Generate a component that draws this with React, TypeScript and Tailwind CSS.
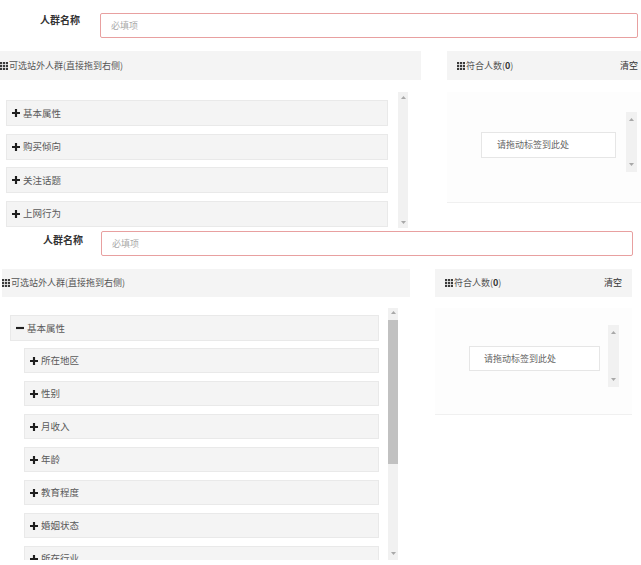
import React from 'react';

function GridIcon() {
  return (
    <svg width="8" height="8" viewBox="0 0 8 8" className="shrink-0 mr-[1px]">
      {[0, 3, 6].flatMap((y) =>
        [0, 3, 6].map((x) => <rect key={`${x}-${y}`} x={x} y={y} width="2.2" height="2.2" fill="#3a3a3a" />)
      )}
    </svg>
  );
}

function PlusIcon() {
  return (
    <svg width="8" height="8" viewBox="0 0 9 9" className="shrink-0">
      <path d="M3.3 0h2.4v3.3H9v2.4H5.7V9H3.3V5.7H0V3.3h3.3z" fill="#1f1f1f" />
    </svg>
  );
}

function MinusIcon() {
  return (
    <svg width="8" height="8" viewBox="0 0 9 9" className="shrink-0">
      <rect x="0" y="3.3" width="9" height="2.4" fill="#1f1f1f" />
    </svg>
  );
}

function Arrow({ down }: { down?: boolean }) {
  return (
    <svg width="5" height="3" viewBox="0 0 5 3">
      <path d={down ? 'M0 0h5L2.5 3z' : 'M2.5 0L5 3H0z'} fill="#a8a8a8" />
    </svg>
  );
}

function Item({ label, open }: { label: string; open?: boolean }) {
  return (
    <div className="flex items-center gap-[3px] pl-[5px] bg-[#f4f4f4] border border-[#e9e9e9] text-[9.5px] text-[#5a5a5a] shrink-0 h-full">
      {open ? <MinusIcon /> : <PlusIcon />}
      <span>{label}</span>
    </div>
  );
}

const subItems = ['所在地区', '性别', '月收入', '年龄', '教育程度', '婚姻状态', '所在行业'];

export default function App() {
  return (
    <div className="w-[641px] h-[565px] overflow-hidden bg-white font-['Noto_Sans_CJK_SC','Liberation_Sans',sans-serif]">
      {/* collapsed state */}
      <section className="h-[228px] overflow-hidden">
        <div className="flex items-start pt-[13px]">
          <div className="w-[100px] shrink-0 pl-[40px] pt-[1px] text-[10px] leading-[12px] font-bold text-[#333]">人群名称</div>
          <div className="w-[538px] h-[25px] shrink-0 border border-[#e8a0a0] rounded-[2px] flex items-center pl-[10px] text-[9px] text-[#aaa]">
            必填项
          </div>
        </div>

        <div className="flex mt-[13px] h-[29px]">
          <div className="w-[421px] shrink-0 bg-[#f4f4f4] flex items-center text-[9px] text-[#555]">
            <GridIcon />
            可选站外人群(直接拖到右侧)
          </div>
          <div className="ml-[26px] w-[205px] shrink-0 bg-[#f4f4f4] flex items-center pl-[10px] pr-[14px] text-[9px] text-[#555]">
            <GridIcon />
            符合人数(<b className="text-[#333]">0</b>)
            <span className="ml-auto text-[#333]">清空</span>
          </div>
        </div>

        <div className="flex mt-[12px]">
          <div className="w-[421px] shrink-0 flex">
            <div className="w-[388px] h-[136px] pl-[6px] pt-[8px] flex flex-col gap-[7.5px] overflow-hidden">
              {['基本属性', '购买倾向', '关注话题', '上网行为'].map((t) => (
                <div key={t} className="h-[26px] shrink-0">
                  <Item label={t} />
                </div>
              ))}
            </div>
            <div className="ml-[10px] w-[10px] h-[136px] bg-[#f1f1f1] flex flex-col items-center justify-between py-[4px]">
              <Arrow />
              <Arrow down />
            </div>
          </div>
          <div className="ml-[26px] w-[205px] shrink-0 h-[111px] border-b border-[#f0f0f0] bg-[#fdfdfd] flex items-start pl-[34px]">
            <div className="mt-[40px] w-[135px] h-[26px] border border-[#e6e6e6] bg-white flex items-center pl-[15px] text-[9px] text-[#666]">
              请拖动标签到此处
            </div>
            <div className="mt-[20px] ml-[10px] w-[11px] h-[60px] bg-[#f1f1f1] flex flex-col items-center justify-between py-[6px]">
              <Arrow />
              <Arrow down />
            </div>
          </div>
        </div>
      </section>

      {/* expanded state */}
      <section className="h-[337px] overflow-hidden">
        <div className="flex items-start pt-[3px]">
          <div className="w-[101px] shrink-0 pl-[43px] pt-[3px] text-[10px] leading-[12px] font-bold text-[#333]">人群名称</div>
          <div className="w-[532px] h-[25px] shrink-0 border border-[#e8a0a0] rounded-[2px] flex items-center pl-[10px] text-[9px] text-[#aaa]">
            必填项
          </div>
        </div>

        <div className="flex mt-[13px] h-[28px]">
          <div className="ml-[2px] w-[408px] shrink-0 bg-[#f4f4f4] flex items-center text-[9px] text-[#555]">
            <GridIcon />
            可选站外人群(直接拖到右侧)
          </div>
          <div className="ml-[25px] w-[197px] shrink-0 bg-[#f4f4f4] flex items-center pl-[10px] pr-[10px] text-[9px] text-[#555]">
            <GridIcon />
            符合人数(<b className="text-[#333]">0</b>)
            <span className="ml-auto text-[#333]">清空</span>
          </div>
        </div>

        <div className="flex mt-[11px]">
          <div className="w-[398px] shrink-0 flex">
            <div className="w-[388px] h-[252px] pl-[10px] pt-[7px] flex flex-col overflow-hidden">
              <div className="w-[369px] h-[26px] shrink-0">
                <Item label="基本属性" open />
              </div>
              <div className="ml-[14px] mt-[7px] w-[355px] flex flex-col gap-[8px]">
                {subItems.map((t) => (
                  <div key={t} className="h-[25px] shrink-0">
                    <Item label={t} />
                  </div>
                ))}
              </div>
            </div>
            <div className="w-[10px] h-[252px] bg-[#f1f1f1] flex flex-col items-center pt-[3px] pb-[5px]">
              <Arrow />
              <div className="mt-[6px] w-full h-[144px] bg-[#c1c1c1]" />
              <div className="mt-auto">
                <Arrow down />
              </div>
            </div>
          </div>
          <div className="ml-[37px] w-[197px] shrink-0 h-[107px] border-b border-[#f0f0f0] bg-[#fdfdfd] flex items-start pl-[34px]">
            <div className="mt-[38px] w-[131px] h-[25px] border border-[#e6e6e6] bg-white flex items-center pl-[14px] text-[9px] text-[#666]">
              请拖动标签到此处
            </div>
            <div className="mt-[17px] ml-[8px] w-[11px] h-[62px] bg-[#f1f1f1] flex flex-col items-center justify-between py-[6px]">
              <Arrow />
              <Arrow down />
            </div>
          </div>
        </div>
      </section>
    </div>
  );
}
